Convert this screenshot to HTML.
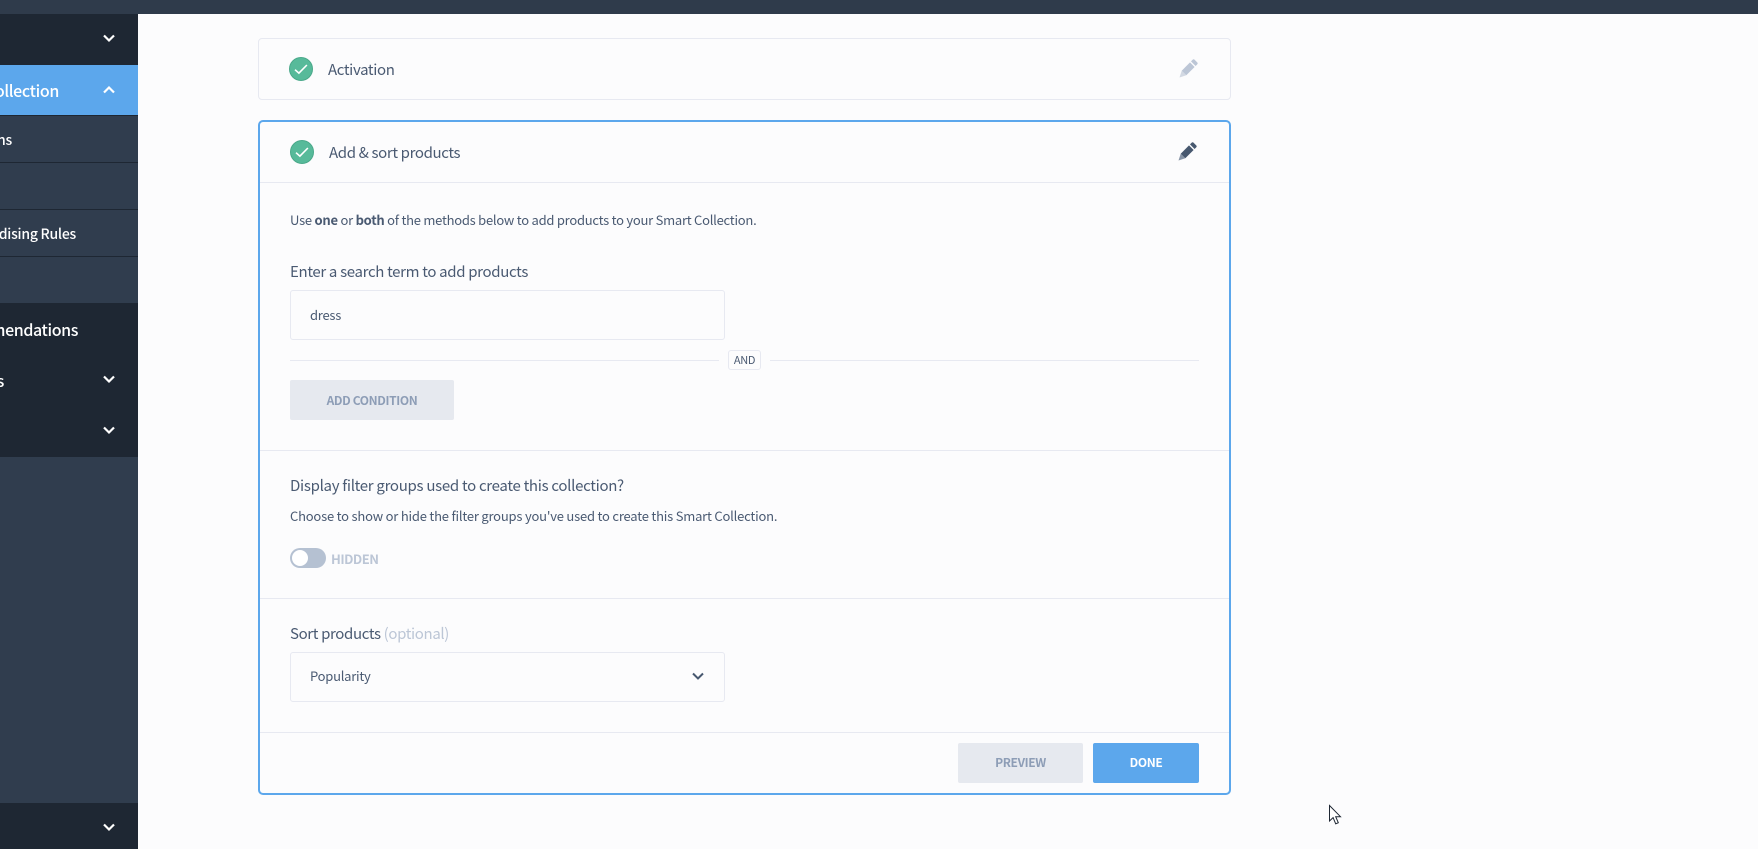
<!DOCTYPE html>
<html><head><meta charset="utf-8"><style>
html,body{margin:0;padding:0;background:#fcfcfd;width:1758px;height:849px;overflow:hidden}
body{position:relative;font-family:"Noto Sans CJK JP","Liberation Sans",sans-serif;color:#4a5a72}
.a{position:absolute;box-sizing:border-box}
.t{position:absolute;white-space:nowrap;line-height:20px;height:20px}
.l{font-size:15px;letter-spacing:-.36px}
.s{font-size:13px;letter-spacing:-.25px}
.side{color:#fff;font-size:15px;letter-spacing:-.3px;font-weight:500;text-align:right;left:-300px}
.line{position:absolute;background:#e7e9f1;height:1px}
.btn{position:absolute;box-sizing:border-box;border-radius:2px;text-align:center;font-weight:700;font-size:12px;letter-spacing:-.35px;background:#e6e9ef;color:#8d9db6}
.field{position:absolute;box-sizing:border-box;background:#fcfcfd;border:1px solid #e7e9f1;border-radius:3px}
svg{position:absolute;overflow:visible}
</style></head><body>
<div class="a" style="left:0;top:0;width:1758px;height:14px;background:#2f3b4b"></div>
<div class="a" style="left:0;top:14px;width:138px;height:835px;background:#303d4e"></div>
<div class="a" style="left:0;top:14px;width:138px;height:51px;background:#1e2733"></div>
<div class="a" style="left:0;top:65px;width:138px;height:50px;background:#5ca7ec"></div>
<div class="a" style="left:0;top:115px;width:138px;height:1px;background:#1e2733"></div>
<div class="a" style="left:0;top:162px;width:138px;height:1px;background:#1e2733"></div>
<div class="a" style="left:0;top:209px;width:138px;height:1px;background:#1e2733"></div>
<div class="a" style="left:0;top:256px;width:138px;height:1px;background:#1e2733"></div>
<div class="a" style="left:0;top:303px;width:138px;height:154px;background:#1e2733"></div>
<div class="a" style="left:0;top:803px;width:138px;height:46px;background:#1e2733"></div>
<div class="t side" style="top:80px;width:359px;font-size:16px;letter-spacing:-.35px">Smart Collection</div>
<div class="t side" style="top:130px;width:312px;font-size:14px;letter-spacing:-.25px">Collections</div>
<div class="t side" style="top:224px;width:376px;font-size:14px;letter-spacing:-.25px">Merchandising Rules</div>
<div class="t side" style="top:319px;width:378px;font-size:16px;letter-spacing:-.4px">Recommendations</div>
<div class="t side" style="top:370px;width:304px;font-size:16px;letter-spacing:-.35px">Settings</div>
<svg style="left:103px;top:34px" width="12" height="8" viewBox="0 0 12 8"><path d="M1 1.5l5 5 5-5" fill="none" stroke="#fff" stroke-width="2.2"/></svg>
<svg style="left:103px;top:86px" width="12" height="8" viewBox="0 0 12 8"><path d="M1 6.5l5-5 5 5" fill="none" stroke="#fff" stroke-width="2.2"/></svg>
<svg style="left:103px;top:375px" width="12" height="8" viewBox="0 0 12 8"><path d="M1 1.5l5 5 5-5" fill="none" stroke="#fff" stroke-width="2.2"/></svg>
<svg style="left:103px;top:426px" width="12" height="8" viewBox="0 0 12 8"><path d="M1 1.5l5 5 5-5" fill="none" stroke="#fff" stroke-width="2.2"/></svg>
<svg style="left:103px;top:823px" width="12" height="8" viewBox="0 0 12 8"><path d="M1 1.5l5 5 5-5" fill="none" stroke="#fff" stroke-width="2.2"/></svg>

<div class="a" style="left:258px;top:38px;width:973px;height:62px;border:1px solid #e7e9f1;border-radius:4px"></div>
<svg style="left:289px;top:57px" width="24" height="24" viewBox="0 0 24 24"><circle cx="12" cy="12" r="11.5" fill="#57ba9a" stroke="#4aa98a"/><path d="M6 12.7l3.9 3.4 8-8.1" fill="none" stroke="#fff" stroke-width="1.6"/></svg>
<div class="t l" style="left:328px;top:59.5px">Activation</div>
<svg style="left:1176px;top:57px" width="24" height="24" viewBox="0 0 24 24"><path fill="#d3d9e3" d="M3.5 20.5L5.7 13.7 10.3 18.3z"/><path fill="#bcc6d6" d="M5.7 13.7L14 5.4 18.6 10 10.3 18.3z"/><path fill="#bcc6d6" d="M15 4.4l1.6-1.6a1.4 1.4 0 012 0l2.6 2.6a1.4 1.4 0 010 2L19.6 9z"/></svg>

<div class="a" style="left:258px;top:120px;width:973px;height:675px;border:2px solid #5ca7ec;border-radius:5px"></div>
<svg style="left:290px;top:140px" width="24" height="24" viewBox="0 0 24 24"><circle cx="12" cy="12" r="11.5" fill="#57ba9a" stroke="#4aa98a"/><path d="M6 12.7l3.9 3.4 8-8.1" fill="none" stroke="#fff" stroke-width="1.6"/></svg>
<div class="t l" style="left:329px;top:142.5px">Add &amp; sort products</div>
<svg style="left:1174.5px;top:140px" width="24" height="24" viewBox="0 0 24 24"><path fill="#8794a6" d="M3.5 20.5L5.7 13.7 10.3 18.3z"/><path fill="#47586f" d="M5.7 13.7L14 5.4 18.6 10 10.3 18.3z"/><path fill="#47586f" d="M15 4.4l1.6-1.6a1.4 1.4 0 012 0l2.6 2.6a1.4 1.4 0 010 2L19.6 9z"/></svg>
<div class="line" style="left:260px;top:182px;width:969px"></div>

<div class="t s" style="left:290px;top:210px">Use <b style="font-weight:600">one</b> or <b style="font-weight:600">both</b> of the methods below to add products to your Smart Collection.</div>
<div class="t l" style="left:290px;top:262px;letter-spacing:-.33px">Enter a search term to add products</div>
<div class="field" style="left:290px;top:290px;width:435px;height:50px"></div>
<div class="t s" style="left:310px;top:305px">dress</div>

<div class="line" style="left:290px;top:360px;width:429px"></div>
<div class="line" style="left:770px;top:360px;width:429px"></div>
<div class="a" style="left:728px;top:350px;width:33px;height:20px;border:1px solid #e7e9f1;border-radius:3px;background:#fcfcfd;font-size:11px;letter-spacing:-.3px;line-height:18px;text-align:center">AND</div>
<div class="btn" style="left:290px;top:380px;width:164px;height:40px;line-height:41px">ADD CONDITION</div>
<div class="line" style="left:260px;top:450px;width:969px"></div>

<div class="t l" style="left:290px;top:476px;letter-spacing:-.295px">Display filter groups used to create this collection?</div>
<div class="t s" style="left:290px;top:506px;letter-spacing:-.21px">Choose to show or hide the filter groups you've used to create this Smart Collection.</div>
<div class="a" style="left:290px;top:548px;width:36px;height:20px;border-radius:10px;background:#b5c1d2"></div>
<div class="a" style="left:292px;top:550px;width:16px;height:16px;border-radius:50%;background:#fff"></div>
<div class="t" style="left:331px;top:549px;font-size:13px;letter-spacing:-.5px;font-weight:700;color:#bcc6d6">HIDDEN</div>
<div class="line" style="left:260px;top:598px;width:969px"></div>

<div class="t l" style="left:290px;top:623.5px">Sort products <span style="color:#bcc6d6">(optional)</span></div>
<div class="field" style="left:290px;top:652px;width:435px;height:50px"></div>
<div class="t s" style="left:310px;top:666px">Popularity</div>
<svg style="left:692px;top:672px" width="12" height="8" viewBox="0 0 12 8"><path d="M1 1.5l5 5 5-5" fill="none" stroke="#47586f" stroke-width="2"/></svg>
<div class="line" style="left:260px;top:732px;width:969px"></div>

<div class="btn" style="left:958px;top:743px;width:125px;height:40px;line-height:40px">PREVIEW</div>
<div class="btn" style="left:1093px;top:743px;width:106px;height:40px;line-height:40px;background:#5ca7ec;color:#fff">DONE</div>

<svg style="left:1329px;top:805px" width="14" height="20" viewBox="0 0 14 20"><path d="M.5.5v15.5l3.6-3.4 2.6 6.2 2.6-1.1-2.6-6h4.8z" fill="#fff" stroke="#1e2733" stroke-width="1"/></svg>
</body></html>
